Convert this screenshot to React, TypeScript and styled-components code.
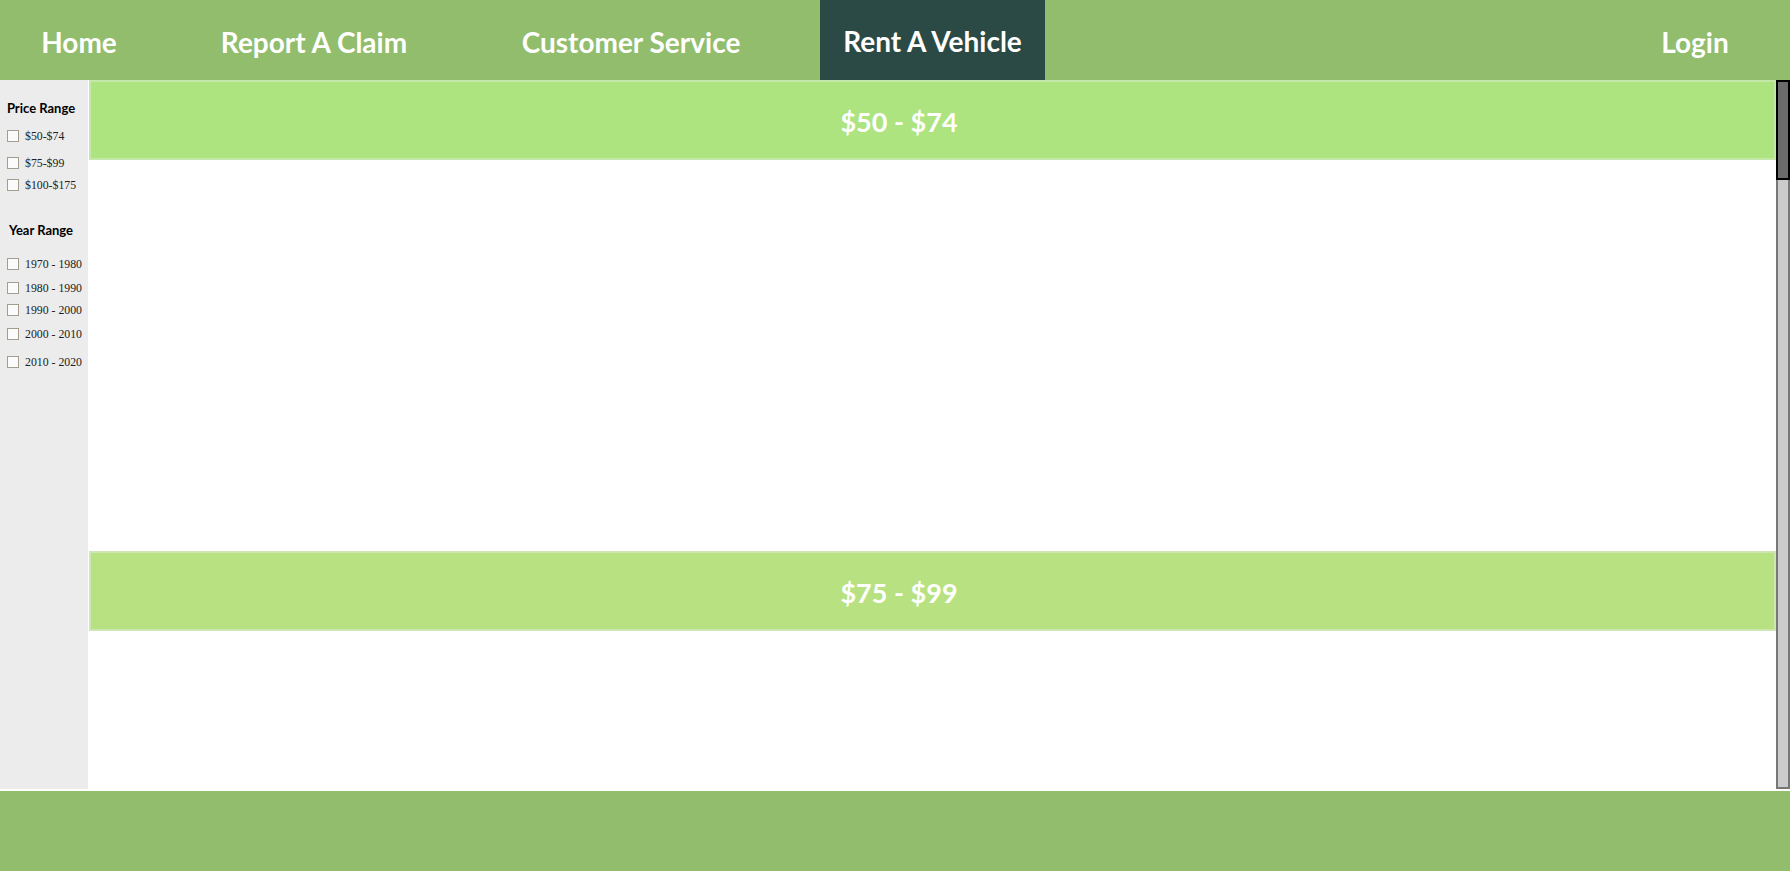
import React from "react";
import styled, { createGlobalStyle } from "styled-components";

const appColors = {
  header: "#91bd6c",
  active: "#2b4a46",
  sidebar: "#ececec",
  white: "#ffffff",
};

const GlobalStyle = createGlobalStyle`
  html, body {
    margin: 0;
    padding: 0;
    background: #ffffff;
    overflow: hidden;
  }
  * {
    box-sizing: border-box;
  }
`;

const Page = styled.div`
  display: flex;
  flex-direction: column;
  width: 1790px;
  height: 871px;
  font-family: Lato, "Open Sans", sans-serif;
`;

const NavBar = styled.nav`
  display: flex;
  align-items: stretch;
  height: 80px;
  padding-right: 40px;
  background: ${appColors.header};
`;

const NavItem = styled.a<{ $active?: boolean; $offset?: number; $width: number; $push?: boolean }>`
  display: flex;
  align-items: center;
  justify-content: center;
  width: ${(p) => p.$width}px;
  margin-left: ${(p) => (p.$push ? "auto" : `${p.$offset ?? 0}px`)};
  padding-top: ${(p) => (p.$active ? 2 : 4)}px;
  background: ${(p) => (p.$active ? appColors.active : "transparent")};
  color: ${appColors.white};
  font-size: 28px;
  font-weight: 700;
  white-space: nowrap;
  text-decoration: none;
  cursor: pointer;
`;

const Middle = styled.div`
  display: flex;
  height: 711px;
`;

const Sidebar = styled.aside`
  display: flex;
  flex-direction: column;
  width: 88px;
  height: 709px;
  margin-right: 1px;
  background: ${appColors.sidebar};
`;

const FilterTitle = styled.div<{ $space: number }>`
  margin-top: ${(p) => p.$space}px;
  padding-right: 6px;
  line-height: 20px;
  text-align: center;
  font-size: 13px;
  font-weight: 700;
  color: #000;
`;

const Option = styled.label<{ $space: number }>`
  display: flex;
  align-items: center;
  gap: 6px;
  height: 22px;
  margin-top: ${(p) => p.$space}px;
  padding-left: 7px;
  font-family: "Liberation Serif", "Times New Roman", serif;
  font-size: 11.8px;
  color: #222;
  white-space: nowrap;
`;

const Check = styled.input`
  appearance: none;
  width: 12px;
  height: 12px;
  margin: 0;
  border: 1px solid #a59c90;
  background: #fbfbfb;
  flex-shrink: 0;
`;

const Listing = styled.main`
  display: flex;
  flex: 1;
  height: 709px;
`;

const Viewport = styled.div`
  flex: 1;
  overflow: hidden;
`;

const ScrollTrack = styled.div`
  display: flex;
  flex-direction: column;
  width: 14px;
  background: #cbcbcb;
  border: 2px solid #777777;
`;

const ScrollThumb = styled.div`
  height: 100px;
  margin: -2px -2px 0;
  background: #6b6b6b;
  border: 2px solid #000000;
`;

const Section = styled.section`
  display: flex;
  flex-direction: column;
  height: 471px;
`;

const Banner = styled.h2<{ $bg: string; $edge: string }>`
  display: flex;
  align-items: center;
  justify-content: center;
  height: 80px;
  margin: 0;
  padding: 2px 67px 0 0;
  background: ${(p) => p.$bg};
  border: 2px solid ${(p) => p.$edge};
  color: ${appColors.white};
  font-size: 27px;
  font-weight: 700;
`;

const SectionBody = styled.div`
  flex: 1;
  background: #ffffff;
`;

const Footer = styled.footer`
  height: 80px;
  background: ${appColors.header};
`;

const navLinks = [
  { label: "Home", width: 120, offset: 19 },
  { label: "Report A Claim", width: 230, offset: 60 },
  { label: "Customer Service", width: 262, offset: 71 },
  { label: "Rent A Vehicle", width: 225, offset: 58, active: true },
  { label: "Login", width: 110, push: true },
];

const priceOptions = [
  { label: "$50-$74", space: 7 },
  { label: "$75-$99", space: 5 },
  { label: "$100-$175", space: 0 },
];

const yearOptions = [
  { label: "1970 - 1980", space: 13 },
  { label: "1980 - 1990", space: 2 },
  { label: "1990 - 2000", space: 0 },
  { label: "2000 - 2010", space: 2 },
  { label: "2010 - 2020", space: 6 },
];

const sections = [
  { title: "$50 - $74", bg: "#ade47f", edge: "#c6e7aa" },
  { title: "$75 - $99", bg: "#b8e281", edge: "#cde6b4" },
];

export default function App() {
  return (
    <Page>
      <GlobalStyle />
      <NavBar>
        {navLinks.map((link) => (
          <NavItem
            key={link.label}
            $width={link.width}
            $offset={link.offset}
            $active={link.active}
            $push={link.push}
          >
            {link.label}
          </NavItem>
        ))}
      </NavBar>

      <Middle>
        <Sidebar>
          <FilterTitle $space={18}>Price Range</FilterTitle>
          {priceOptions.map((o) => (
            <Option key={o.label} $space={o.space}>
              <Check type="checkbox" />
              <span>{o.label}</span>
            </Option>
          ))}
          <FilterTitle $space={24}>Year Range</FilterTitle>
          {yearOptions.map((o) => (
            <Option key={o.label} $space={o.space}>
              <Check type="checkbox" />
              <span>{o.label}</span>
            </Option>
          ))}
        </Sidebar>

        <Listing>
          <Viewport>
            {sections.map((s) => (
              <Section key={s.title}>
                <Banner $bg={s.bg} $edge={s.edge}>
                  {s.title}
                </Banner>
                <SectionBody />
              </Section>
            ))}
          </Viewport>
          <ScrollTrack>
            <ScrollThumb />
          </ScrollTrack>
        </Listing>
      </Middle>

      <Footer />
    </Page>
  );
}
